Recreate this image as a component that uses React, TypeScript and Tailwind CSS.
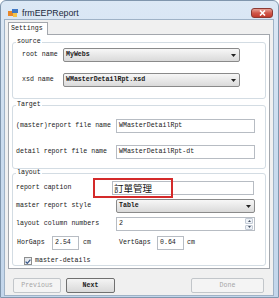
import React from "react";

const mono = "font-['Liberation_Mono','DejaVu_Sans_Mono',monospace]";

function Combo({ value, className = "" }: { value: string; className?: string }) {
  return (
    <div
      className={`h-[14px] flex items-center rounded-[2px] border border-[#8a8a8a] bg-linear-to-b from-[#f7f7f7] to-[#dadada] pl-[2px] pr-[3px] font-bold text-[#1a1a1a] ${className}`}
    >
      <span>{value}</span>
      <svg className="ml-auto" width="5" height="3" viewBox="0 0 5 3">
        <path d="M0 0h5L2.5 3z" fill="#222" />
      </svg>
    </div>
  );
}

function TextBox({ value, className = "" }: { value: string; className?: string }) {
  return (
    <div className={`h-[14px] flex items-center border border-[#b7bcc3] bg-white pl-[2px] text-[#1a1a1a] ${className}`}>
      {value}
    </div>
  );
}

function Group({ title, className = "", children }: { title: string; className?: string; children: React.ReactNode }) {
  return (
    <fieldset className={`mx-[3px] rounded-[3px] border border-[#d3dce3] ${className}`}>
      <legend className="ml-[3px] px-[1px] leading-[8px] text-[#1a1a1a]">{title}</legend>
      {children}
    </fieldset>
  );
}

function Row({ label, children, className = "" }: { label: string; children: React.ReactNode; className?: string }) {
  return (
    <div className={`flex items-center pl-[3px] ${className}`}>
      <span className="w-[100px] shrink-0">{label}</span>
      {children}
    </div>
  );
}

export default function App() {
  return (
    <div className={`w-[279px] h-[298px] bg-white text-[6.6px] leading-[8px] text-[#222] ${mono}`}>
      <div className="w-[279px] h-[298px] flex flex-col rounded-t-[6px] border border-[#8096ad] bg-linear-to-b from-[#dce8f5] via-[#c9dbee] to-[#c3d6eb]">
        {/* Title bar */}
        <div className="h-[18px] pt-[6px] pl-[7px] pr-[5px] flex items-center">
          <svg width="10" height="8" viewBox="0 0 10 8">
            <rect x="0" y="2" width="5" height="5" fill="#e8872a" />
            <rect x="4" y="0" width="6" height="4" fill="#3f78c6" />
            <rect x="5" y="4" width="4" height="4" fill="#f2c24a" />
          </svg>
          <span className="ml-[4px] font-['Liberation_Sans',Arial,sans-serif] text-[8.8px] text-[#1c2a3c]">frmEEPReport</span>
          <div className="ml-auto w-[22px] h-[10px] flex items-center justify-center rounded-[3px] border border-[#8d3a33] bg-linear-to-b from-[#e7a197] via-[#d0574a] to-[#c1392c]">
            <svg width="7" height="6" viewBox="0 0 7 6">
              <path d="M1 0.5l5 5M6 0.5l-5 5" stroke="#fff" strokeWidth="1.6" />
            </svg>
          </div>
        </div>

        {/* Client area */}
        <div className="ml-[3px] mr-[4px] flex flex-col border border-[#9fb2c6] bg-[#f0f0f0] px-[3px] pb-[2px]">
          <div className="pt-[2px] flex">
            <div className="relative z-10 -mb-[1px] w-[40px] h-[13px] flex items-center pl-[2px] border border-b-0 border-[#a3a7ad] bg-white text-[#1a1a1a]">
              Settings
            </div>
          </div>

          {/* Tab page */}
          <div className="border border-[#a3a7ad] bg-white pt-[3px] pb-[2px]">
            <Group title="source">
              <div className="pt-[2px] pb-[11px] flex flex-col gap-[11px]">
                <div className="flex items-center pl-[9px]">
                  <span className="w-[41px] shrink-0">root name</span>
                  <Combo value="MyWebs" className="w-[177px]" />
                </div>
                <div className="flex items-center pl-[9px]">
                  <span className="w-[41px] shrink-0">xsd name</span>
                  <Combo value="WMasterDetailRpt.xsd" className="w-[177px]" />
                </div>
              </div>
            </Group>

            <Group title="Target" className="mt-[2px]">
              <div className="pt-[10px] pb-[9px] flex flex-col gap-[12px]">
                <Row label="(master)report file name">
                  <TextBox value="WMasterDetailRpt" className="w-[139px]" />
                </Row>
                <Row label="detail report file name">
                  <TextBox value="WMasterDetailRpt-dt" className="w-[139px]" />
                </Row>
              </div>
            </Group>

            <Group title="layout">
              <div className="pt-[4px] flex flex-col">
                <div className="relative flex items-center pl-[3px]">
                  <span className="w-[96px] shrink-0">report caption</span>
                  <div className="w-[142px] h-[14px] flex items-center border border-[#b7bcc3] bg-white pl-[1px] font-['Noto_Sans_CJK_TC','Noto_Sans_CJK_SC',sans-serif] text-[9.5px] text-[#111]">
                    訂單管理
                  </div>
                  <div className="absolute left-[80px] -top-[3px] w-[80px] h-[20px] border-2 border-[#d42a2a]" />
                </div>
                <Row label="master report style" className="mt-[4px]">
                  <Combo value="Table" className="w-[139px]" />
                </Row>
                <Row label="layout column numbers" className="mt-[4px]">
                  <div className="w-[139px] h-[14px] flex items-center border border-[#b7bcc3] bg-white pl-[2px] pr-[1px] text-[#1a1a1a]">
                    <span>2</span>
                    <div className="ml-auto w-[8px] h-[12px] flex flex-col gap-[1px]">
                      <div className="flex-1 flex items-center justify-center rounded-[1px] border border-[#c3cbd6] bg-[#eef2f7]">
                        <svg width="3" height="2" viewBox="0 0 3 2">
                          <path d="M0 2h3L1.5 0z" fill="#4a5568" />
                        </svg>
                      </div>
                      <div className="flex-1 flex items-center justify-center rounded-[1px] border border-[#c3cbd6] bg-[#eef2f7]">
                        <svg width="3" height="2" viewBox="0 0 3 2">
                          <path d="M0 0h3L1.5 2z" fill="#4a5568" />
                        </svg>
                      </div>
                    </div>
                  </div>
                </Row>
                <div className="mt-[5px] flex items-center pl-[4px]">
                  <span className="w-[35px] shrink-0">HorGaps</span>
                  <TextBox value="2.54" className="w-[27px]" />
                  <span className="ml-[4px] w-[36px] shrink-0">cm</span>
                  <span className="w-[38px] shrink-0">VertGaps</span>
                  <TextBox value="0.64" className="w-[27px]" />
                  <span className="ml-[3px]">cm</span>
                </div>
                <div className="mt-[7px] h-[8px] flex items-center pl-[11px]">
                  <div className="w-[8px] h-[8px] flex items-center justify-center border border-[#8e8f8f] bg-linear-to-br from-[#dfe3e8] to-[#fbfbfb]">
                    <svg width="6" height="5" viewBox="0 0 6 5">
                      <path d="M0.6 2.6l1.7 1.7L5.4 0.6" stroke="#3b5a8c" strokeWidth="1.3" fill="none" />
                    </svg>
                  </div>
                  <span className="ml-[3px]">master-details</span>
                </div>
              </div>
            </Group>
          </div>

          {/* Buttons */}
          <div className="mt-[9px] flex items-center pl-[5px] pr-[6px]">
            <div className="w-[48px] h-[15px] flex items-center justify-center rounded-[2px] border border-[#c2c6ca] bg-[#f4f4f4] text-[#a6a6a6]">
              Previous
            </div>
            <div className="ml-[5px] w-[49px] h-[15px] flex items-center justify-center rounded-[2px] border border-[#707070] bg-linear-to-b from-[#f4f4f4] to-[#d9d9d9] font-bold text-[#1a1a1a]">
              Next
            </div>
            <div className="ml-auto w-[73px] h-[15px] flex items-center justify-center rounded-[2px] border border-[#c2c6ca] bg-[#f4f4f4] text-[#a6a6a6]">
              Done
            </div>
          </div>
        </div>
      </div>
    </div>
  );
}
